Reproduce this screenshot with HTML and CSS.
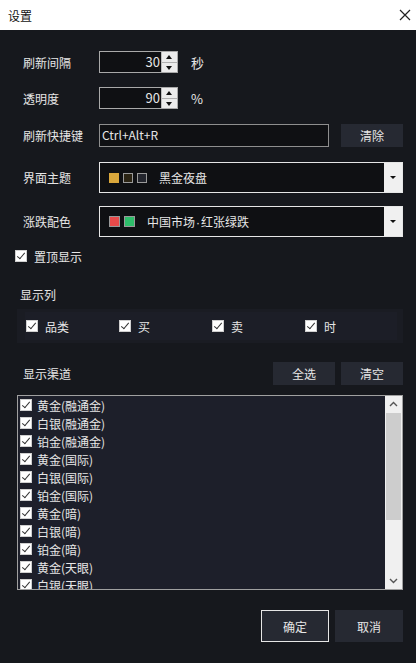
FILE: index.html
```html
<!DOCTYPE html>
<html lang="zh-CN">
<head>
    <meta charset="UTF-8">
    <title>设置</title>
    <link rel="stylesheet" href="styles.css">
</head>
<body>
<div class="dialog">
    <div class="titlebar">
        <span class="title">设置</span>
        <svg class="close" width="12" height="12" viewBox="0 0 12 12">
            <path d="M1 1 L11 11 M11 1 L1 11" stroke="#222" stroke-width="1.2" fill="none"/>
        </svg>
    </div>

    <div class="content">
        <div class="row row-1">
            <span class="label">刷新间隔</span>
            <div class="spin">
                <span class="spin-value">30</span>
                <div class="spin-btns">
                    <span class="spin-up"></span>
                    <span class="spin-down"></span>
                </div>
            </div>
            <span class="unit">秒</span>
        </div>

        <div class="row row-2">
            <span class="label">透明度</span>
            <div class="spin">
                <span class="spin-value">90</span>
                <div class="spin-btns">
                    <span class="spin-up"></span>
                    <span class="spin-down"></span>
                </div>
            </div>
            <span class="unit">%</span>
        </div>

        <div class="row row-3">
            <span class="label">刷新快捷键</span>
            <div class="hotkey">Ctrl+Alt+R</div>
            <button class="btn btn-clear">清除</button>
        </div>

        <div class="row row-4">
            <span class="label">界面主题</span>
            <div class="select">
                <div class="select-value">
                    <span class="swatch" style="background:#d9a73c"></span>
                    <span class="swatch swatch-outline" style="background:#2b2414"></span>
                    <span class="swatch swatch-outline" style="background:#23252d"></span>
                    <span class="select-text theme-text">黑金夜盘</span>
                </div>
                <div class="select-arrow"><span class="tri-down"></span></div>
            </div>
        </div>

        <div class="row row-5">
            <span class="label">涨跌配色</span>
            <div class="select">
                <div class="select-value">
                    <span class="swatch swatch-wide" style="background:#e84a4a"></span>
                    <span class="swatch swatch-wide" style="background:#2ebd6a"></span>
                    <span class="select-text color-text">中国市场<span class="dot">·</span>红张绿跌</span>
                </div>
                <div class="select-arrow"><span class="tri-down"></span></div>
            </div>
        </div>

        <label class="check-row topmost">
            <span class="cb"></span>
            <span>置顶显示</span>
        </label>

        <div class="section-title cols-title">显示列</div>
        <div class="col-group">
            <div class="col-inner">
                <label class="col-item"><span class="cb"></span><span>品类</span></label>
                <label class="col-item"><span class="cb"></span><span>买</span></label>
                <label class="col-item"><span class="cb"></span><span>卖</span></label>
                <label class="col-item"><span class="cb"></span><span>时</span></label>
            </div>
            <div class="col-bar"></div>
        </div>

        <div class="channel-head">
            <span class="section-title">显示渠道</span>
            <div class="channel-btns">
                <button class="btn">全选</button>
                <button class="btn">清空</button>
            </div>
        </div>

        <div class="listbox">
            <div class="list-items">
                <label class="list-item"><span class="cb"></span><span>黄金(融通金)</span></label>
                <label class="list-item"><span class="cb"></span><span>白银(融通金)</span></label>
                <label class="list-item"><span class="cb"></span><span>铂金(融通金)</span></label>
                <label class="list-item"><span class="cb"></span><span>黄金(国际)</span></label>
                <label class="list-item"><span class="cb"></span><span>白银(国际)</span></label>
                <label class="list-item"><span class="cb"></span><span>铂金(国际)</span></label>
                <label class="list-item"><span class="cb"></span><span>黄金(暗)</span></label>
                <label class="list-item"><span class="cb"></span><span>白银(暗)</span></label>
                <label class="list-item"><span class="cb"></span><span>铂金(暗)</span></label>
                <label class="list-item"><span class="cb"></span><span>黄金(天眼)</span></label>
                <label class="list-item"><span class="cb"></span><span>白银(天眼)</span></label>
            </div>
            <div class="scrollbar">
                <svg class="sb-arrow" width="17" height="17" viewBox="0 0 17 17">
                    <path d="M5 10 L8.5 6.5 L12 10" stroke="#555" stroke-width="1.4" fill="none"/>
                </svg>
                <div class="sb-thumb"></div>
                <div class="sb-track"></div>
                <svg class="sb-arrow" width="17" height="17" viewBox="0 0 17 17">
                    <path d="M5 7 L8.5 10.5 L12 7" stroke="#555" stroke-width="1.4" fill="none"/>
                </svg>
            </div>
        </div>

        <div class="footer">
            <button class="btn btn-big btn-ok">确定</button>
            <button class="btn btn-big">取消</button>
        </div>
    </div>
</div>
</body>
</html>
```

FILE: styles.css
```css
body {
    margin: 0;
    font-family: "Noto Sans CJK SC", "Liberation Sans", sans-serif;
    font-size: 12px;
    background-color: #16181d;
    color: #e6e6e6;
}
.dialog {
    width: 416px;
    height: 663px;
    display: flex;
    flex-direction: column;
    overflow: hidden;
}
.titlebar {
    height: 30px;
    background-color: #ffffff;
    color: #111111;
    display: flex;
    align-items: center;
    justify-content: space-between;
    padding: 0 5px 0 8px;
    flex-shrink: 0;
}
.title {
    font-size: 12px;
}
.content {
    flex: 1;
    background-color: #16181d;
    display: flex;
    flex-direction: column;
}

/* form rows */
.row {
    display: flex;
    align-items: center;
    padding-left: 23px;
}
.label {
    width: 76px;
    flex-shrink: 0;
    color: #e6e6e6;
}
.row-1 { margin-top: 21px; height: 22px; }
.row-2 { margin-top: 14px; height: 22px; }
.row-3 { margin-top: 15px; height: 23px; }
.row-4 { margin-top: 15px; height: 31px; }
.row-5 { margin-top: 13px; height: 31px; }

.spin {
    width: 79px;
    height: 22px;
    box-sizing: border-box;
    border: 1px solid #a9a9a9;
    background-color: #0f1013;
    display: flex;
    align-items: stretch;
}
.spin-value {
    flex: 1;
    text-align: right;
    padding-right: 1px;
    line-height: 20px;
    font-size: 13px;
}
.spin-btns {
    width: 15px;
    display: flex;
    flex-direction: column;
    background-color: #e8e8e8;
    border-left: 1px solid #bdbdbd;
}
.spin-up, .spin-down {
    flex: 1;
    position: relative;
    background-color: #ececec;
}
.spin-up {
    border-bottom: 1px solid #b0b0b0;
}
.spin-up::after, .spin-down::after {
    content: "";
    position: absolute;
    left: 4px;
    border-left: 3.5px solid transparent;
    border-right: 3.5px solid transparent;
}
.spin-up::after {
    top: 3px;
    border-bottom: 4px solid #111;
}
.spin-down::after {
    top: 3px;
    border-top: 4px solid #111;
}
.unit {
    margin-left: 13px;
    font-size: 13px;
}

.hotkey {
    width: 230px;
    height: 23px;
    box-sizing: border-box;
    border: 1px solid #8e8e8e;
    background-color: #0f1013;
    padding-left: 2px;
    line-height: 20px;
    font-size: 12px;
}
.btn {
    width: 62px;
    height: 23px;
    border: none;
    background-color: #262932;
    color: #e6e6e6;
    font-family: inherit;
    font-size: 12px;
    padding: 0;
}
.btn-clear {
    margin-left: 12px;
}

.select {
    width: 304px;
    height: 31px;
    box-sizing: border-box;
    border: 1px solid #e6e6e6;
    background-color: #0f1013;
    display: flex;
}
.select-value {
    flex: 1;
    display: flex;
    align-items: center;
    padding-left: 9px;
}
.swatch {
    width: 10px;
    height: 10px;
    box-sizing: border-box;
    margin-right: 4px;
}
.swatch-outline {
    border: 1px solid #9a9a9a;
}
.swatch-wide {
    width: 11px;
    height: 11px;
    border: 1px solid #999;
    margin-right: 4px;
}
.theme-text { margin-left: 8px; }
.color-text { margin-left: 8px; }
.dot {
    font-family: "Liberation Sans", sans-serif;
    padding: 0 1px;
}
.select-arrow {
    width: 18px;
    background-color: #f0f0f0;
    display: flex;
    align-items: center;
    justify-content: center;
}
.tri-down {
    border-left: 3px solid transparent;
    border-right: 3px solid transparent;
    border-top: 3px solid #111;
}

/* checkboxes */
.cb {
    width: 12px;
    height: 12px;
    box-sizing: border-box;
    background-color: #ffffff;
    border: 1px solid #cfcfcf;
    position: relative;
    flex-shrink: 0;
}
.cb::after {
    content: "";
    position: absolute;
    left: 3px;
    top: 0px;
    width: 3px;
    height: 7px;
    border-right: 1.5px solid #333;
    border-bottom: 1.5px solid #333;
    transform: rotate(40deg);
}
.check-row {
    display: flex;
    align-items: center;
    gap: 7px;
}
.topmost {
    margin-top: 13px;
    height: 12px;
    padding-left: 15px;
}

.section-title {
    color: #e6e6e6;
}
.cols-title {
    margin-top: 25px;
    padding-left: 20px;
    height: 16px;
    line-height: 16px;
}
.col-group {
    margin: 6px 13px 0 17px;
    height: 34px;
    background-color: #1a1c23;
    display: flex;
    padding: 3px 6px 3px 8px;
    box-sizing: border-box;
}
.col-inner {
    flex: 1;
    display: flex;
    align-items: center;
    background-color: #1c1e27;
}
.col-item {
    display: flex;
    align-items: center;
    gap: 7px;
    width: 92px;
    padding-left: 1px;
}
.col-bar {
    width: 2px;
    background-color: #23252d;
}

.channel-head {
    margin-top: 19px;
    height: 23px;
    display: flex;
    align-items: center;
    justify-content: space-between;
    padding: 0 13px 0 23px;
}
.channel-btns {
    display: flex;
    gap: 6px;
}

.listbox {
    margin: 10px 13px 0 17px;
    height: 195px;
    box-sizing: border-box;
    border: 1px solid #a0a0a0;
    background-color: #1d1f2a;
    display: flex;
    overflow: hidden;
}
.list-items {
    flex: 1;
    overflow: hidden;
}
.list-item {
    display: flex;
    align-items: center;
    gap: 5px;
    height: 18px;
    padding-left: 2px;
    font-size: 12px;
}
.scrollbar {
    width: 17px;
    background-color: #f0f0f0;
    display: flex;
    flex-direction: column;
}
.sb-arrow {
    display: block;
    flex-shrink: 0;
}
.sb-thumb {
    height: 107px;
    margin: 0 1px;
    background-color: #cdcdcd;
}
.sb-track {
    flex: 1;
}

.footer {
    margin-top: 20px;
    display: flex;
    justify-content: flex-end;
    gap: 6px;
    padding-right: 13px;
}
.btn-big {
    width: 68px;
    height: 32px;
    font-size: 12px;
}
.btn-ok {
    border: 1px solid #e6e6e6;
}
```
